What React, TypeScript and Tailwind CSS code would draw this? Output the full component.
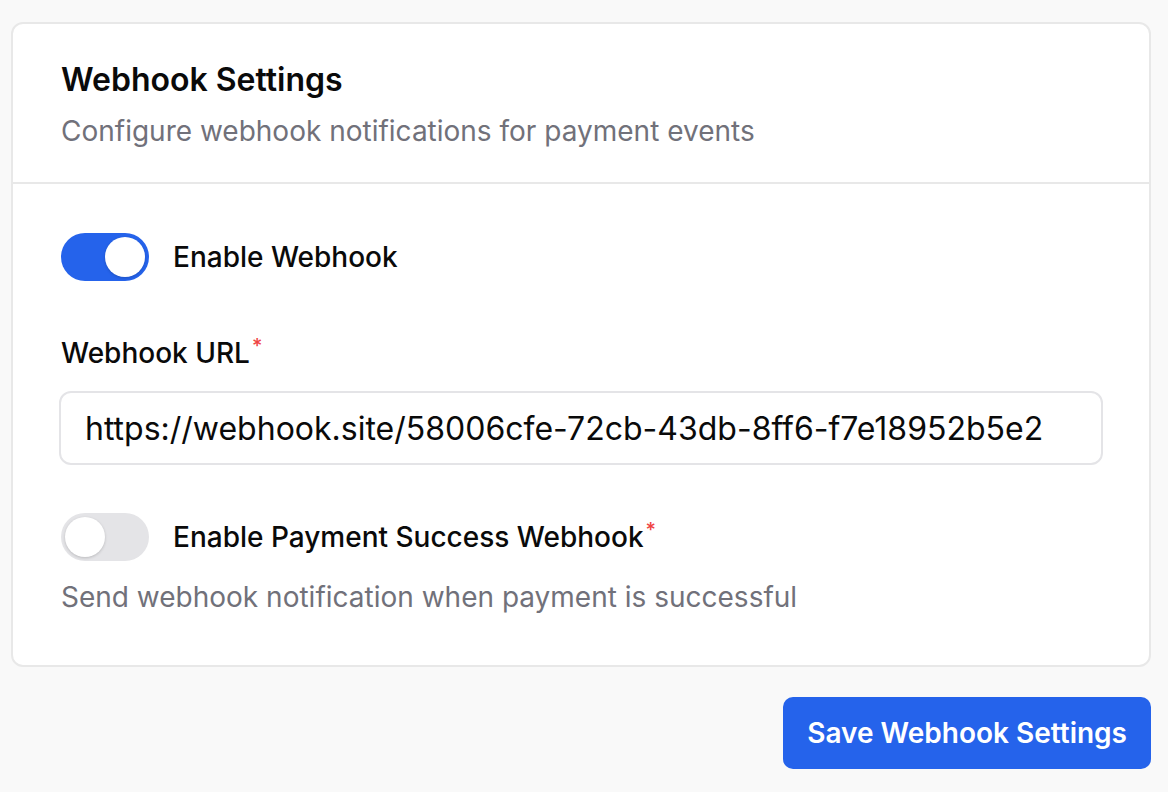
import { useState } from "react";

function Toggle({ on, onChange }: { on: boolean; onChange: () => void }) {
  return (
    <button
      type="button"
      onClick={onChange}
      className={`flex h-[48px] w-[88px] shrink-0 items-center rounded-full p-[4px] transition-colors ${
        on ? "justify-end bg-[#2563eb]" : "justify-start bg-[#e4e4e7]"
      }`}
    >
      <span className="block h-[40px] w-[40px] rounded-full bg-white shadow-[0_1px_3px_rgba(0,0,0,0.18)]" />
    </button>
  );
}

export default function App() {
  const [enabled, setEnabled] = useState(true);
  const [success, setSuccess] = useState(false);
  const [url, setUrl] = useState("https://webhook.site/58006cfe-72cb-43db-8ff6-f7e18952b5e2");

  return (
    <div className="min-h-[792px] bg-[#f9f9f9] pl-[11px] pr-[17px] pt-[22px] font-['Inter',sans-serif] text-[#0a0a0a]">
      <div className="rounded-[12px] border-2 border-[#e8e8e8] bg-white">
        <div className="border-b-2 border-[#e8e8e8] px-[48px] pb-[33px] pt-[36px]">
          <h2 className="text-[32px] font-semibold leading-[40px]">Webhook Settings</h2>
          <p className="mt-[13px] text-[28px] leading-[36px] text-[#71717a]">
            Configure webhook notifications for payment events
          </p>
        </div>

        <div className="px-[48px] pb-[50px] pt-[49px]">
          <div className="flex items-center gap-[24px]">
            <Toggle on={enabled} onChange={() => setEnabled(!enabled)} />
            <span className="text-[28px] font-medium">Enable Webhook</span>
          </div>

          <label className="mt-[52px] block text-[28px] font-medium leading-[40px]">
            Webhook URL<sup className="ml-[2px] text-[20px] text-[#ef4444]">*</sup>
          </label>
          <input
            value={url}
            onChange={(e) => setUrl(e.target.value)}
            className="-mx-[2px] mt-[18px] block h-[74px] w-[calc(100%+4px)] rounded-[12px] border-2 border-[#e4e4e7] px-[24px] font-['Inter',sans-serif] text-[32px] text-[#0a0a0a] outline-none"
          />

          <div className="mt-[48px] flex items-center gap-[24px]">
            <Toggle on={success} onChange={() => setSuccess(!success)} />
            <span className="text-[28px] font-medium">
              Enable Payment Success Webhook
              <sup className="ml-[2px] text-[20px] text-[#ef4444]">*</sup>
            </span>
          </div>
          <p className="mt-[18px] text-[28px] leading-[36px] text-[#71717a]">
            Send webhook notification when payment is successful
          </p>
        </div>
      </div>

      <div className="mt-[30px] flex justify-end">
        <button className="h-[72px] rounded-[10px] bg-[#2563eb] px-[24px] text-[28px] font-semibold text-white">
          Save Webhook Settings
        </button>
      </div>
    </div>
  );
}
